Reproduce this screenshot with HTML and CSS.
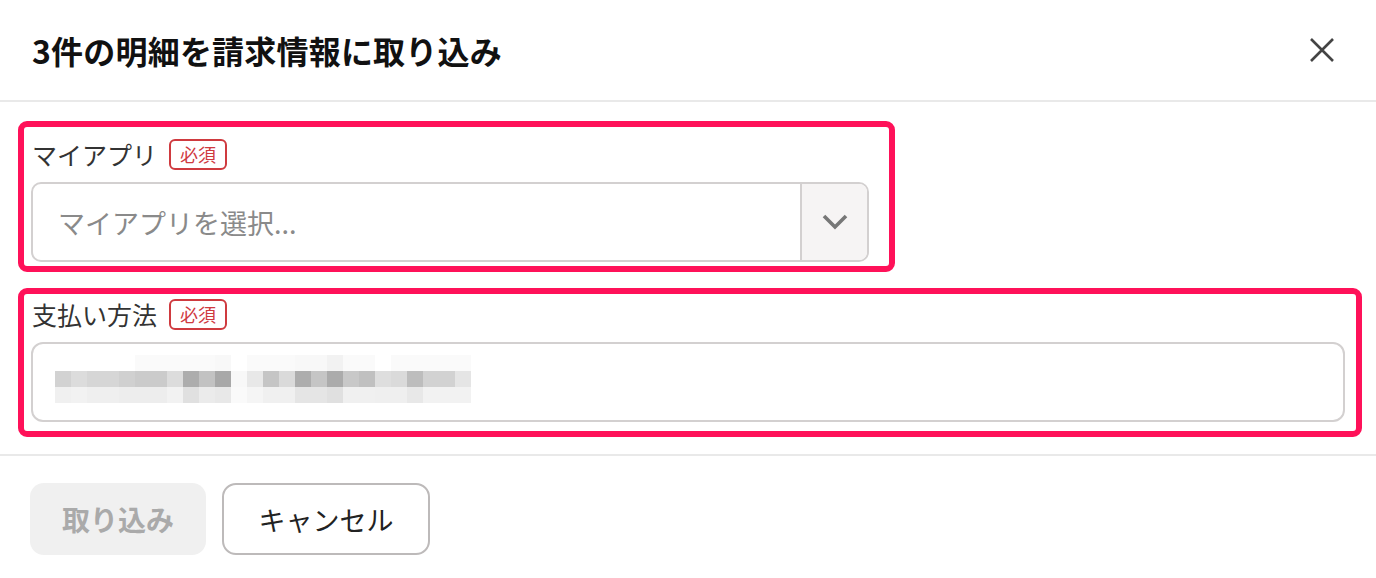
FILE: index.html
```html
<!DOCTYPE html>
<html lang="ja">
<head>
  <meta charset="UTF-8">
  <meta name="viewport" content="width=device-width, initial-scale=1.0">
  <title>請求情報に取り込み</title>
  <link rel="stylesheet" href="styles.css">
</head>
<body>

  <!-- Dialog -->
  <div class="dialog">
    <div class="dialog-header">
      <h1 class="dialog-title">3件の明細を請求情報に取り込み</h1>
      <button class="close-btn" aria-label="閉じる">
        <svg width="24" height="24" viewBox="0 0 24 24">
          <path d="M1 1 L23 23 M23 1 L1 23" stroke="#444" stroke-width="2.6" fill="none"/>
        </svg>
      </button>
    </div>

    <div class="dialog-body">
      <div class="highlight highlight-app">
        <div class="field">
          <div class="field-label">
            <span>マイアプリ</span>
            <span class="required">必須</span>
          </div>
          <div class="select">
            <span class="select-placeholder">マイアプリを選択...</span>
            <span class="select-toggle">
              <svg width="26" height="16" viewBox="0 0 26 16">
                <polyline points="2,2 13,13 24,2" stroke="#777" stroke-width="3.6" fill="none"/>
              </svg>
            </span>
          </div>
        </div>
      </div>

      <div class="highlight highlight-payment">
        <div class="field">
          <div class="field-label">
            <span>支払い方法</span>
            <span class="required">必須</span>
          </div>
          <div class="text-input">
            <div id="maskedValue" class="masked-value"></div>
          </div>
        </div>
      </div>
    </div>

    <div class="dialog-footer">
      <button class="btn btn-primary" disabled>取り込み</button>
      <button class="btn btn-secondary">キャンセル</button>
    </div>
  </div>

  <script src="script.js"></script>
</body>
</html>
```

FILE: styles.css
```css
/* Global Styles */
body {
  margin: 0;
  padding: 0;
  background-color: #fff;
  font-family: "Noto Sans CJK JP", "Noto Sans", sans-serif;
  color: #333;
}

/* Header */
.dialog-header {
  height: 102px;
  display: flex;
  align-items: center;
  justify-content: space-between;
  padding: 0 42px 0 32px;
  border-bottom: 2px solid #e9e9e9;
  box-sizing: border-box;
}

.dialog-title {
  margin: 0;
  font-size: 32px;
  font-weight: 700;
  color: #111;
  letter-spacing: 0.2px;
}

.close-btn {
  background: none;
  border: none;
  padding: 0;
  width: 24px;
  height: 24px;
  cursor: pointer;
}

/* Body */
.dialog-body {
  padding: 19px 14px 17px 18px;
}

.highlight {
  border: 6px solid #ff1159;
  border-radius: 9px;
  box-sizing: border-box;
}

.highlight-app {
  width: 877px;
  padding: 9px 20px 4px 7px;
  margin-bottom: 16px;
}

.highlight-payment {
  padding: 2px 11px 9px 7px;
}

.field-label {
  display: flex;
  align-items: center;
  height: 36px;
  font-size: 25px;
  color: #333;
  margin-bottom: 10px;
  padding-left: 1px;
}

.required {
  margin-left: 12px;
  border: 2px solid #cf3a3f;
  border-radius: 6px;
  color: #cf3a3f;
  font-size: 18px;
  line-height: 27px;
  padding: 0 9px;
}

/* Select */
.select {
  display: flex;
  height: 80px;
  border: 2px solid #d3d0d0;
  border-radius: 10px;
  box-sizing: border-box;
  overflow: hidden;
}

.select-placeholder {
  flex: 1;
  display: flex;
  align-items: center;
  padding-left: 25px;
  font-size: 27px;
  color: #8a8a8a;
}

.select-toggle {
  width: 65px;
  display: flex;
  align-items: center;
  justify-content: center;
  background-color: #f6f4f4;
  border-left: 2px solid #d3d0d0;
}

/* Text input */
.text-input {
  height: 80px;
  display: flex;
  align-items: center;
  padding: 0 0 6px 22px;
  border: 2px solid #d3d0d0;
  border-radius: 12px;
  box-sizing: border-box;
}

.masked-value {
  display: grid;
  grid-template-columns: repeat(26, 16px);
  grid-auto-rows: 16px;
}

/* Footer */
.dialog-footer {
  display: flex;
  gap: 16px;
  padding: 27px 30px;
  border-top: 2px solid #e9e9e9;
}

.btn {
  height: 72px;
  border-radius: 14px;
  font-family: inherit;
  font-size: 27px;
  cursor: pointer;
  box-sizing: border-box;
}

.btn-primary {
  width: 176px;
  background-color: #f0f0f0;
  border: none;
  color: #aaa;
  font-weight: 700;
  font-size: 28px;
  cursor: default;
}

.btn-secondary {
  width: 208px;
  background-color: #fff;
  border: 2px solid #bdbaba;
  color: #222;
}
```

FILE: script.js
```javascript
// Masked payment method value, drawn as grey cells (one row per array)
const maskRows = [
  [255, 255, 255, 255, 255, 250, 250, 250, 250, 250, 248, 255, 250, 250, 250, 248, 248, 242, 250, 250, 255, 250, 250, 250, 250, 250],
  [210, 220, 214, 214, 208, 203, 203, 220, 173, 194, 168, 248, 232, 197, 218, 173, 197, 171, 200, 192, 222, 218, 189, 210, 210, 229],
  [240, 242, 239, 239, 237, 237, 237, 242, 224, 235, 232, 250, 245, 240, 240, 229, 229, 224, 240, 240, 239, 239, 232, 242, 242, 242]
];

let maskedValue = document.getElementById('maskedValue');

maskRows.forEach(function (row) {
  row.forEach(function (level) {
    let cell = document.createElement('span');
    cell.style.background = 'rgb(' + level + ',' + level + ',' + level + ')';
    maskedValue.appendChild(cell);
  });
});
```
